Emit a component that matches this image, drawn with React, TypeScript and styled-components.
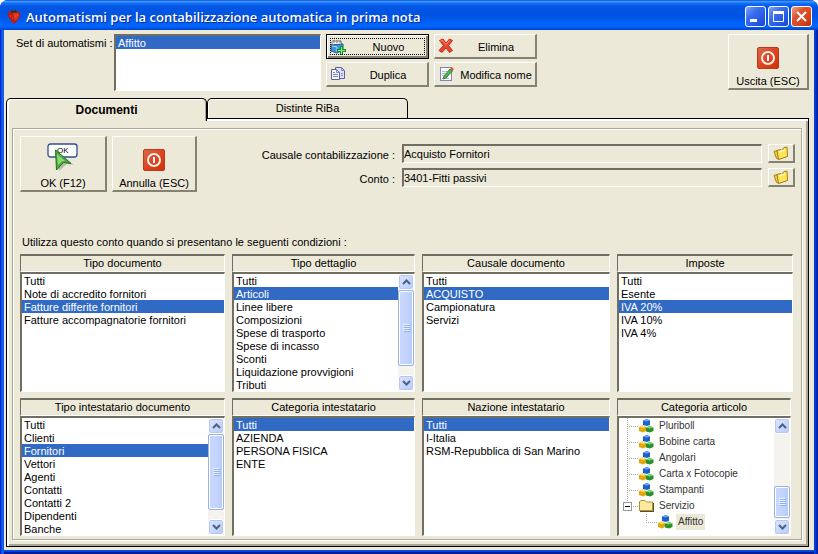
import React, { useId, useState } from "react";
import styled, { createGlobalStyle, css } from "styled-components";

const face = "#ece9d8";
const shade = "#aca899";
const dark = "#716f64";
const highlight = "#316ac5";

const GlobalStyle = createGlobalStyle`
  * { box-sizing: border-box; }
  body { margin: 0; background: #fff; }
  body, button, input {
    font-family: "Liberation Sans", Arial, sans-serif;
    font-size: 11px;
    line-height: 13px;
    color: #000;
  }
  ul { list-style: none; margin: 0; padding: 0; }
  svg { display: block; flex: none; }
`;

const Window = styled.div`
  min-height: 100vh;
  display: flex;
  flex-direction: column;
  background: #0441d8;
  border-radius: 8px 8px 0 0;
  overflow: hidden;
`;

const TitleBar = styled.header`
  height: 30px;
  display: flex;
  align-items: center;
  gap: 5px;
  padding: 3px 6px 0 7px;
  background: linear-gradient(
    180deg,
    #0a4bd0 0%,
    #3d95ff 5%,
    #1370f5 11%,
    #0356e4 22%,
    #0054e3 55%,
    #0062fb 78%,
    #0066ff 88%,
    #0053e0 95%,
    #0042cc 100%
  );
`;

const Title = styled.h1`
  flex: 1;
  margin: 0;
  font: 600 13px/18px "Open Sans", "Trebuchet MS", sans-serif;
  color: #fff;
  text-shadow: 1px 1px #0a2a90;
  white-space: nowrap;
`;

const Captions = styled.div`
  display: flex;
  gap: 2px;
`;

const CaptionButton = styled.button<{ $close?: boolean }>`
  width: 21px;
  height: 21px;
  padding: 0;
  display: grid;
  place-items: center;
  border: 1px solid #fff;
  border-radius: 3px;
  background: ${(p) =>
    p.$close
      ? "linear-gradient(135deg, #f0a088 0%, #e0532f 35%, #d8431c 70%, #b5300c 100%)"
      : "linear-gradient(135deg, #7ea5f5 0%, #3a6ff0 35%, #2559e6 70%, #1a48c8 100%)"};
`;

const Frame = styled.div`
  flex: 1;
  display: flex;
  padding: 0 4px 4px;
  background: linear-gradient(90deg, #0019cf 0, #0831d9 1px, #166aee 2px, #0855dd 4px, #0855dd 50%, #0441d8 calc(100% - 4px), #0138d0 calc(100% - 2px), #001590 100%);
`;

const Client = styled.main`
  flex: 1;
  min-width: 0;
  display: flex;
  flex-direction: column;
  background: ${face};
  box-shadow: 0 1px #0855dd, 0 2px #0441d8, 0 4px #001ea0;
`;

const TopBar = styled.section`
  display: flex;
  align-items: flex-start;
  gap: 5px;
  padding: 4px 5px 0 12px;
`;

const SetLabel = styled.span`
  width: 93px;
  padding-top: 3px;
  white-space: nowrap;
`;

const sunken = css`
  border: 1px solid #fff;
  border-top: 2px solid ${dark};
  border-left: 2px solid ${dark};
`;

const SetBox = styled.div`
  width: 207px;
  height: 57px;
  background: #fff;
  ${sunken}
`;

const raised = css`
  border: 1px solid #fff;
  border-right: 2px solid #858272;
  border-bottom: 2px solid #858272;
`;

const Commands = styled.div`
  display: grid;
  grid-template-columns: 103px 103px;
  grid-auto-rows: 25px;
  gap: 3px 5px;
`;

const CommandButton = styled.button<{ $default?: boolean }>`
  display: flex;
  align-items: center;
  padding: 0 3px;
  background: ${face};
  ${raised}
  ${(p) =>
    p.$default &&
    css`
      border: 1px solid #000;
      box-shadow: inset 1px 1px #fff, inset -2px -2px #858272;
      outline: 1px dotted #000;
      outline-offset: -5px;
    `}
`;

const CommandText = styled.span`
  flex: 1;
  text-align: center;
  padding: 2px 0 0 6px;
  white-space: nowrap;
`;

const BigButton = styled.button<{ $width: number }>`
  width: ${(p) => p.$width}px;
  height: 56px;
  padding: 0;
  display: flex;
  flex-direction: column;
  align-items: center;
  justify-content: flex-end;
  gap: 6px;
  background: ${face};
  white-space: nowrap;
  ${raised}
`;

const Spacer = styled.div`
  flex: 1;
`;

const Tabs = styled.div`
  display: flex;
  align-items: flex-end;
  margin: 7px 5px 0 2px;
`;

const Tab = styled.button<{ $active: boolean }>`
  width: 201px;
  height: 20px;
  padding: 0;
  background: ${face};
  border: 1px solid #000;
  border-bottom: 0;
  border-radius: 5px 5px 0 0;
  box-shadow: inset 1px 1px #fff;
  ${(p) =>
    p.$active &&
    css`
      position: relative;
      height: 23px;
      margin-bottom: -3px;
      font-size: 12px;
      font-weight: bold;
      box-shadow: inset 2px 1px #fff, inset -1px 0 ${shade};
    `}
`;

const Page = styled.section`
  flex: 1;
  display: flex;
  margin: 0 5px 3px 2px;
  padding: 7px 4px 4px 3px;
  border: 1px solid #000;
  box-shadow: inset 2px 2px #fff, inset -2px -2px ${shade};
`;

const Group = styled.div`
  flex: 1;
  min-width: 0;
  margin: 2px;
  padding: 7px 6px 3px 7px;
  border: 1px solid ${shade};
  box-shadow: 1px 1px #fff, inset 1px 1px #fff;
`;

const ActionRow = styled.div`
  display: flex;
  align-items: flex-start;
  gap: 5px;
`;

const Fields = styled.div`
  flex: 1;
  display: grid;
  grid-template-columns: auto 360px 27px;
  grid-auto-rows: 19px;
  gap: 5px 6px;
  padding-top: 8px;
`;

const FieldLabel = styled.label`
  text-align: right;
  padding: 5px 1px 0 0;
`;

const FieldInput = styled.input`
  min-width: 0;
  padding: 0;
  background: ${face};
  outline: none;
  ${sunken}
`;

const FolderButton = styled.button`
  display: grid;
  place-items: center;
  padding: 0;
  background: ${face};
  ${raised}
`;

const Hint = styled.p`
  margin: 43px 0 5px 2px;
  line-height: 14px;
`;

const PanelRow = styled.div<{ $last: number; $inset: number }>`
  display: grid;
  grid-template-columns: 205fr 183fr 188fr ${(p) => p.$last}fr;
  gap: 7px;
  padding-right: ${(p) => p.$inset}px;
  margin-bottom: 6px;
  &:last-child { margin-bottom: 0; }
`;

const Panel = styled.section`
  min-width: 0;
`;

const PanelHeader = styled.h2`
  height: 18px;
  margin: 0;
  text-align: center;
  font-size: 11px;
  font-weight: normal;
  line-height: 15px;
  border: 1px solid #fff;
  border-top: 2px solid ${dark};
  border-left: 1px solid ${dark};
`;

const PanelBody = styled.div`
  display: flex;
  height: 120px;
  background: #fff;
  ${sunken}
`;

const Items = styled.ul`
  flex: 1;
  min-width: 0;
`;

const Item = styled.li<{ $selected: boolean }>`
  height: 13px;
  line-height: 15px;
  padding-left: 2px;
  white-space: nowrap;
  cursor: default;
  color: ${(p) => (p.$selected ? "#fff" : "#000")};
  background: ${(p) => (p.$selected ? highlight : "transparent")};
`;

const Scroll = styled.div`
  width: 16px;
  display: flex;
  flex-direction: column;
  background: #f4f3ee;
`;

const ScrollArrow = styled.button`
  height: 16px;
  padding: 0;
  display: grid;
  place-items: center;
  border: 1px solid #fff;
  border-radius: 3px;
  background: linear-gradient(135deg, #dce6fe, #b9cbf8);
  box-shadow: inset 0 0 0 1px #b4c8f6;
`;

const ScrollGap = styled.div<{ $grow: number }>`
  flex: ${(p) => p.$grow} 0 0;
`;

const ScrollThumb = styled.div<{ $grow: number }>`
  flex: ${(p) => p.$grow} 0 0;
  display: grid;
  place-items: center;
  border: 1px solid #98b0e8;
  border-radius: 2px;
  box-shadow: inset 0 0 0 1px #fff;
  background: linear-gradient(90deg, #cad8fd, #c2d3fc 60%, #b6caf7);
`;

const Tree = styled.ul`
  flex: 1;
  min-width: 0;
  padding-left: 2px;
`;

const TreeRow = styled.li`
  height: 16px;
  display: flex;
  align-items: center;
  white-space: nowrap;
  cursor: default;
`;

const TreeText = styled.span<{ $selected?: boolean }>`
  margin-left: 3px;
  padding: 1px 2px 2px;
  font: 10px/13px "Liberation Sans", Tahoma, sans-serif;
  color: #333;
  background: ${(p) => (p.$selected ? face : "transparent")};
`;

const Strawberry = () => (
  <svg width="14" height="16" viewBox="0 0 14 16" aria-hidden="true">
    <path d="M1 5 Q1 2 4 2 L10 2 Q14 3 13 6 Q12 11 7 15 Q1 10 1 5Z" fill="#b81c12" />
    <path d="M6 4 Q11 3 12 6 Q11 10 8 12 Q6 8 6 4Z" fill="#e03420" />
    <path d="M3 3 L5 1 L7 2 L9 0 L9 2 L11 3 L7 4Z" fill="#3a3010" />
    <path d="M3 7h1M5 9h1M8 7h1M10 6h1" stroke="#e8806a" strokeWidth=".7" />
  </svg>
);

const Power = () => (
  <svg width="22" height="22" viewBox="0 0 22 22" aria-hidden="true">
    <defs>
      <linearGradient id="power" x1="0" y1="0" x2="1" y2="1">
        <stop offset="0" stopColor="#d66a50" />
        <stop offset=".5" stopColor="#de4424" />
        <stop offset="1" stopColor="#cf3206" />
      </linearGradient>
    </defs>
    <rect x=".5" y=".5" width="21" height="21" rx="1.5" fill="url(#power)" stroke="#bd3a18" />
    <circle cx="11" cy="11" r="6" fill="none" stroke="#fff0e4" strokeWidth="2" />
    <path d="M11 8v6" stroke="#fff" strokeWidth="2" />
  </svg>
);

const OkPointer = () => (
  <svg width="32" height="28" viewBox="0 0 32 28" aria-hidden="true">
    <rect x="1" y="1" width="29" height="13" rx="2.5" fill="#fff" stroke="#2e4f8c" strokeWidth="1.3" />
    <text x="10" y="10" fontSize="8" fontFamily="Liberation Sans, Arial, sans-serif">OK</text>
    <path d="M11 9 L27 22 L20 21 L12 28Z" fill="#a9a695" opacity=".7" />
    <path d="M8.500 7 L24 20.500 L16.500 19.500 L9.500 27Z" fill="#4cab3a" stroke="#246e1c" />
    <path d="M10 11 L18 18 L15 18 L11 22Z" fill="#8fd878" />
  </svg>
);

const NewIcon = () => (
  <svg width="16" height="16" viewBox="0 0 16 16" aria-hidden="true">
    <path d="M2 2h9l1 4H2Z" fill="#f4f4f0" stroke="#8c8c80" />
    <path d="M4 1v3M7 1v3M10 1v3" stroke="#77756c" />
    <path d="M1 6 L13 5 L13 11 L7 14 L1 12Z" fill="#3f93dc" stroke="#1b5e9e" />
    <path d="M2 7 L7 8 L7 13" fill="none" stroke="#a4d4f8" />
    <path d="M10 7h3v3h3v3h-3v3h-3v-3H7v-3h3Z" fill="#1c8a24" />
    <path d="M11.500 8v7M8 11.500h7" stroke="#8cf08c" />
  </svg>
);

const CrossIcon = () => (
  <svg width="16" height="16" viewBox="0 0 16 16" aria-hidden="true">
    <path d="M1.500 2.500 L5 1 L8 5 L11.500 1 L14.500 2.500 L10.500 7.500 L14.500 12.500 L11.500 14.500 L8 10 L4 14.500 L1 12.500 L5.500 7.500Z" fill="#e8452e" stroke="#c42b18" strokeLinejoin="round" />
    <path d="M2.500 3 L4.500 2.500 L8 6.500 L11.500 2.500" fill="none" stroke="#ff8f78" />
  </svg>
);

const CopyIcon = () => (
  <svg width="16" height="16" viewBox="0 0 16 16" aria-hidden="true">
    <path d="M5.500 1.500h6l3 3v8h-9Z" fill="#dfe4fa" stroke="#5a62a4" />
    <path d="M1.500 3.500h5l3 3v7h-8Z" fill="#f4f6ff" stroke="#5a62a4" />
    <path d="M6.500 3.500v3h3M11.500 1.500v3h3M3 8.500h5M3 10.500h5M3 6.500h2M11 7.500h2M11 9.500h2" fill="none" stroke="#7c86c4" />
  </svg>
);

const EditIcon = () => (
  <svg width="16" height="16" viewBox="0 0 16 16" aria-hidden="true">
    <rect x="2.500" y="1.500" width="11" height="13" fill="#fafbff" stroke="#7f88b4" />
    <path d="M4 5.500h6M4 7.500h5M4 9.500h4M4 12.500h7" stroke="#b4bbda" />
    <path d="M12 3 L14.500 5 L8 12 L5 13 L6 10Z" fill="#4fb446" stroke="#2c7d2a" strokeWidth=".8" />
    <path d="M12 3 L13.500 1 L16 3 L14.500 5Z" fill="#d8553c" />
  </svg>
);

const OpenFolder = () => (
  <svg width="16" height="15" viewBox="0 0 16 15" aria-hidden="true">
    <path d="M1 5.500 L4 4.500 L6 13 L3.500 12.500Z" fill="#f2d34a" stroke="#a87c10" strokeLinejoin="round" />
    <path d="M4 4.500 L8 3.500 L9 4.500 L11 1.500 L14 1 L14.500 10.500 L5.500 13.500Z" fill="#ffe658" stroke="#a87c10" strokeLinejoin="round" />
    <path d="M6 6 L12 4" stroke="#fff8b8" strokeWidth="1.500" />
  </svg>
);

const Cubes = () => (
  <svg width="15" height="14" viewBox="0 0 15 14" aria-hidden="true">
    <path d="M4 1.500 L8 0 L11 1.500 L11 6 L7.500 7 L4 6Z" fill="#1c62cc" />
    <path d="M4 1.500 L8 0 L11 1.500 L7.500 2.500Z" fill="#66a8f4" />
    <path d="M0 8 L3.500 6.500 L7 8 L7 12 L4 13.500 L0 12Z" fill="#e0a80c" />
    <path d="M0 8 L3.500 6.500 L7 8 L4 9Z" fill="#ffe26a" />
    <path d="M7 8.500 L11 7 L14.500 8.500 L14.500 12 L11 13.500 L7 12.500Z" fill="#2c8f2a" />
    <path d="M7 8.500 L11 7 L14.500 8.500 L10.500 9.500Z" fill="#7ed86a" />
  </svg>
);

const ClosedFolder = () => (
  <svg width="15" height="14" viewBox="0 0 15 14" aria-hidden="true">
    <path d="M.5 11.500V2.500L2 1.500h4L7.500 3H13.500V11.500Z" fill="#fbe9a0" stroke="#b0902c" />
    <path d="M1 12.500h14M14.500 4v9" stroke="#55502f" />
  </svg>
);

/* Dotted connector lines to the left of a tree node. */
const Guides = ({ kind }: { kind: "leaf" | "branch" | "child" }) => (
  <svg width={kind === "child" ? 37 : 18} height="16" viewBox={`0 0 ${kind === "child" ? 37 : 18} 16`} aria-hidden="true">
    <g fill="none" stroke="#a5a294" strokeDasharray="1 1">
      {kind === "leaf" && <path d="M6.500 0V16M8 8.500H18" />}
      {kind === "branch" && <path d="M6.500 0V4M12 8.500H18" />}
      {kind === "child" && <path d="M25.500 0V9M27 8.500H37" />}
    </g>
    {kind === "branch" && (
      <>
        <rect x="2.500" y="4.500" width="8" height="8" fill="#fff" stroke="#8f9a9c" />
        <path d="M4 8.500h5" stroke="#000" />
      </>
    )}
  </svg>
);

const Chevron = ({ down }: { down?: boolean }) => (
  <svg width="9" height="6" viewBox="0 0 9 6" aria-hidden="true">
    <path d={down ? "M1 1 L4.500 4.500 L8 1" : "M1 5 L4.500 1.500 L8 5"} fill="none" stroke="#4d6185" strokeWidth="2" />
  </svg>
);

const ScrollBar = ({ before, thumb, after }: { before: number; thumb: number; after: number }) => (
  <Scroll>
    <ScrollArrow aria-label="Scorri su"><Chevron /></ScrollArrow>
    <ScrollGap $grow={before} />
    <ScrollThumb $grow={thumb}>
      <svg width="7" height="8" viewBox="0 0 7 8" aria-hidden="true">
        <path d="M0 .5h6M0 2.500h6M0 4.500h6M0 6.500h6" stroke="#eef4fe" />
        <path d="M1 1.500h6M1 3.500h6M1 5.500h6M1 7.500h6" stroke="#8cb0f8" />
      </svg>
    </ScrollThumb>
    <ScrollGap $grow={after} />
    <ScrollArrow aria-label="Scorri giù"><Chevron down /></ScrollArrow>
  </Scroll>
);

const Choices = ({ items, initial, label }: { items: string[]; initial: number; label: string }) => {
  const [current, setCurrent] = useState(initial);
  return (
    <Items role="listbox" aria-label={label}>
      {items.map((text, i) => (
        <Item key={text} role="option" aria-selected={i === current} $selected={i === current} onClick={() => setCurrent(i)}>
          {text}
        </Item>
      ))}
    </Items>
  );
};

const ListPanel = ({ title, items, selected, scroll }: { title: string; items: string[]; selected: number; scroll?: boolean }) => (
  <Panel>
    <PanelHeader>{title}</PanelHeader>
    <PanelBody>
      <Choices items={items} initial={selected} label={title} />
      {scroll && <ScrollBar before={0} thumb={75} after={9} />}
    </PanelBody>
  </Panel>
);

const Field = ({ label, value }: { label: string; value: string }) => {
  const id = useId();
  return (
    <>
      <FieldLabel htmlFor={id}>{label} :</FieldLabel>
      <FieldInput id={id} value={value} readOnly />
      <FolderButton aria-label={`Sfoglia ${label}`}><OpenFolder /></FolderButton>
    </>
  );
};

const articles = ["Pluriboll", "Bobine carta", "Angolari", "Carta x Fotocopie", "Stampanti"];

export default function App() {
  const [tab, setTab] = useState(0);
  return (
    <>
      <GlobalStyle />
      <Window>
        <TitleBar>
          <Strawberry />
          <Title>Automatismi per la contabilizzazione automatica in prima nota</Title>
          <Captions>
            <CaptionButton aria-label="Riduci a icona">
              <svg width="13" height="13" viewBox="0 0 13 13"><path d="M1 10.500h7" stroke="#fff" strokeWidth="3" /></svg>
            </CaptionButton>
            <CaptionButton aria-label="Ingrandisci">
              <svg width="13" height="13" viewBox="0 0 13 13"><path d="M1.500 2v9.500h10V2" fill="none" stroke="#fff" /><path d="M1 2.500h11" stroke="#fff" strokeWidth="3" /></svg>
            </CaptionButton>
            <CaptionButton $close aria-label="Chiudi">
              <svg width="13" height="13" viewBox="0 0 13 13"><path d="M2 2l9 9M11 2l-9 9" stroke="#fff" strokeWidth="2" /></svg>
            </CaptionButton>
          </Captions>
        </TitleBar>
        <Frame>
          <Client>
            <TopBar>
              <SetLabel>Set di automatismi :</SetLabel>
              <SetBox>
                <Choices items={["Affitto"]} initial={0} label="Set di automatismi" />
              </SetBox>
              <Commands>
                <CommandButton $default><NewIcon /><CommandText>Nuovo</CommandText></CommandButton>
                <CommandButton><CrossIcon /><CommandText>Elimina</CommandText></CommandButton>
                <CommandButton><CopyIcon /><CommandText>Duplica</CommandText></CommandButton>
                <CommandButton><EditIcon /><CommandText>Modifica nome</CommandText></CommandButton>
              </Commands>
              <Spacer />
              <BigButton $width={81}><Power />Uscita (ESC)</BigButton>
            </TopBar>
            <Tabs role="tablist">
              <Tab role="tab" aria-selected={tab === 0} $active={tab === 0} onClick={() => setTab(0)}>Documenti</Tab>
              <Tab role="tab" aria-selected={tab === 1} $active={tab === 1} onClick={() => setTab(1)}>Distinte RiBa</Tab>
            </Tabs>
            <Page role="tabpanel">
              <Group>
                <ActionRow>
                  <BigButton $width={87}><OkPointer />OK (F12)</BigButton>
                  <BigButton $width={85}><Power />Annulla (ESC)</BigButton>
                  <Fields>
                    <Field label="Causale contabilizzazione" value="Acquisto Fornitori" />
                    <Field label="Conto" value="3401-Fitti passivi" />
                  </Fields>
                </ActionRow>
                <Hint>Utilizza questo conto quando si presentano le seguenti condizioni :</Hint>
                <PanelRow $last={176} $inset={2}>
                  <ListPanel title="Tipo documento" selected={2} items={["Tutti", "Note di accredito fornitori", "Fatture differite fornitori", "Fatture accompagnatorie fornitori"]} />
                  <ListPanel title="Tipo dettaglio" selected={1} scroll items={["Tutti", "Articoli", "Linee libere", "Composizioni", "Spese di trasporto", "Spese di incasso", "Sconti", "Liquidazione provvigioni", "Tributi"]} />
                  <ListPanel title="Causale documento" selected={1} items={["Tutti", "ACQUISTO", "Campionatura", "Servizi"]} />
                  <ListPanel title="Imposte" selected={2} items={["Tutti", "Esente", "IVA 20%", "IVA 10%", "IVA 4%"]} />
                </PanelRow>
                <PanelRow $last={174} $inset={4}>
                  <ListPanel title="Tipo intestatario documento" selected={2} scroll items={["Tutti", "Clienti", "Fornitori", "Vettori", "Agenti", "Contatti", "Contatti 2", "Dipendenti", "Banche"]} />
                  <ListPanel title="Categoria intestatario" selected={0} items={["Tutti", "AZIENDA", "PERSONA FISICA", "ENTE"]} />
                  <ListPanel title="Nazione intestatario" selected={0} items={["Tutti", "I-Italia", "RSM-Repubblica di San Marino"]} />
                  <Panel>
                    <PanelHeader>Categoria articolo</PanelHeader>
                    <PanelBody>
                      <Tree role="tree" aria-label="Categoria articolo">
                        {articles.map((name) => (
                          <TreeRow key={name} role="treeitem">
                            <Guides kind="leaf" /><Cubes /><TreeText>{name}</TreeText>
                          </TreeRow>
                        ))}
                        <TreeRow role="treeitem" aria-expanded="true">
                          <Guides kind="branch" /><ClosedFolder /><TreeText>Servizio</TreeText>
                        </TreeRow>
                        <TreeRow role="treeitem" aria-selected="true">
                          <Guides kind="child" /><Cubes /><TreeText $selected>Affitto</TreeText>
                        </TreeRow>
                      </Tree>
                      <ScrollBar before={53} thumb={31} after={1} />
                    </PanelBody>
                  </Panel>
                </PanelRow>
              </Group>
            </Page>
          </Client>
        </Frame>
      </Window>
    </>
  );
}
